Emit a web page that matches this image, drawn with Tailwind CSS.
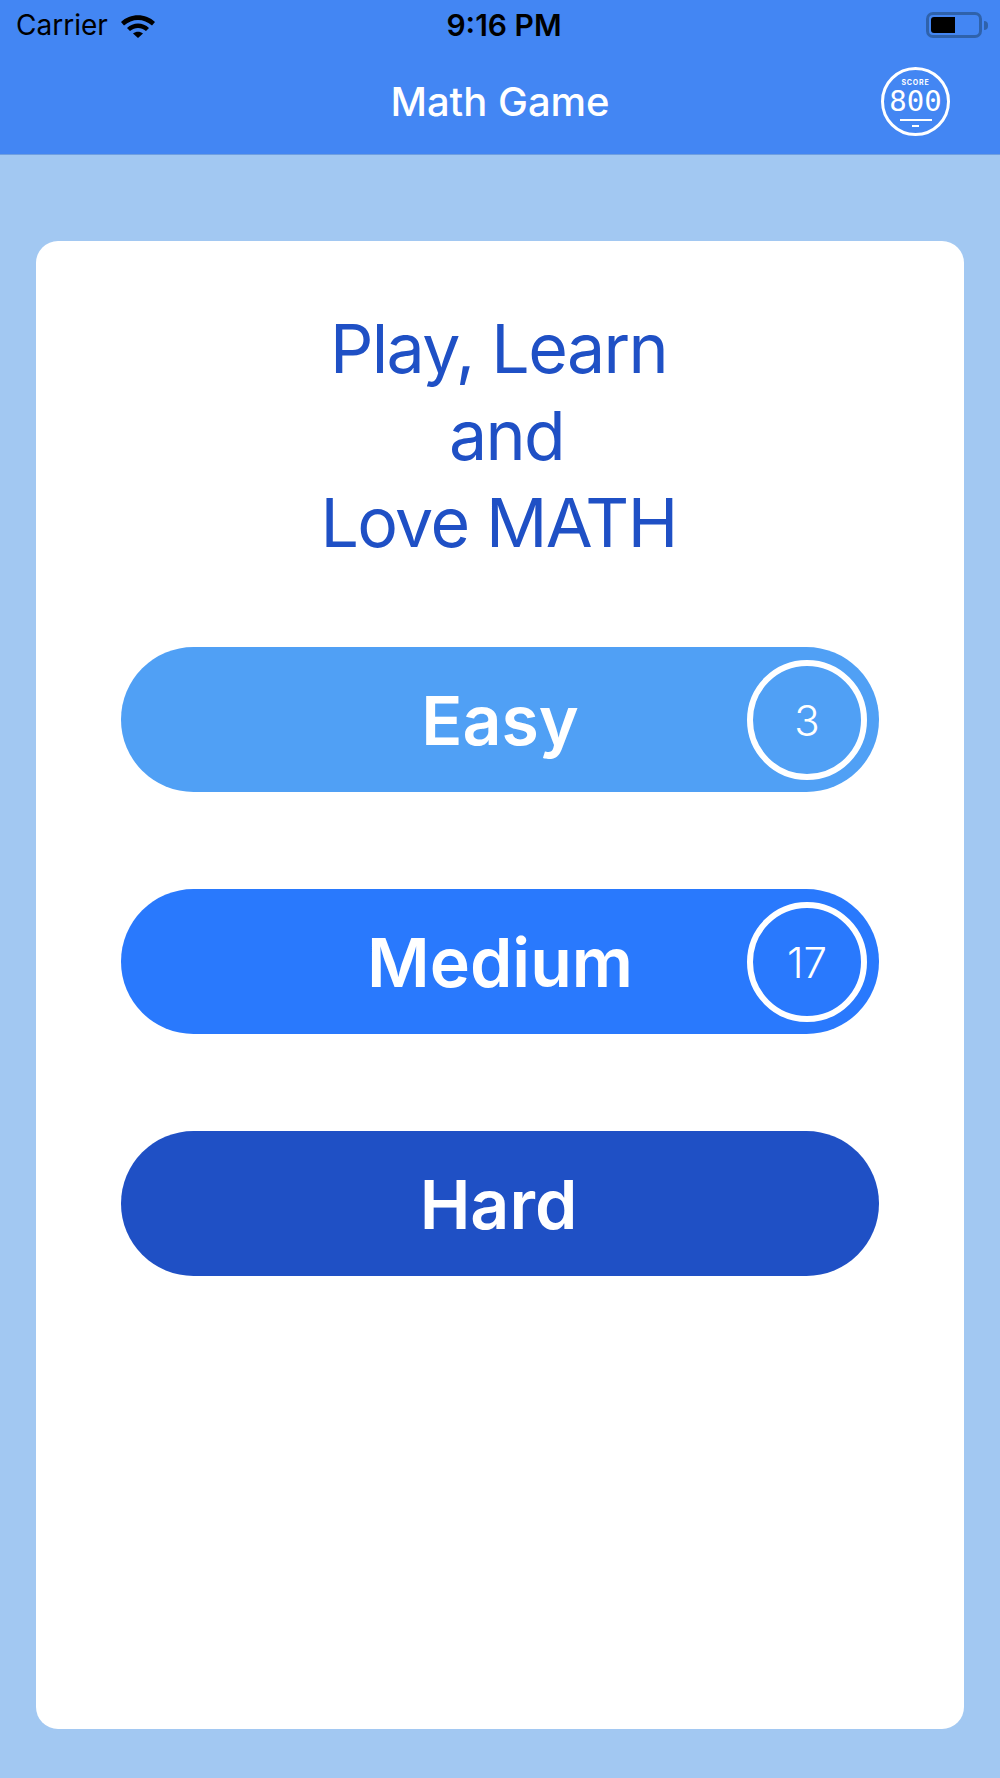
<!DOCTYPE html>
<html lang="en">
<head>
  <meta charset="UTF-8" />
  <title>Math Game</title>
  <script src="https://cdn.jsdelivr.net/npm/@tailwindcss/browser@4"></script>
</head>
<body class="bg-[#a2c8f2] font-['Inter',sans-serif] h-[1778px] w-[1000px] overflow-hidden flex flex-col">
  <header class="h-[155px] bg-[#4386f3] border-b border-[#6f9fe0] shrink-0 flex flex-col">
    <div class="h-[50px] pl-[16px] pr-[12px] grid grid-cols-3 items-center text-black text-[28px]">
      <div class="flex items-center gap-[13px]">
        <span>Carrier</span>
        <svg width="34" height="25" viewBox="0 0 34 25" fill="currentColor">
          <path d="M0 9 C9 0 25 0 34 9 L31 12.5 C23 5 11 5 3 12.5 Z" />
          <path d="M6 15 C12 9 22 9 28 15 L25 18 C20 14 14 14 9 18 Z" />
          <path d="M12 20.5 C15 18 19 18 22 20.5 L17 25 Z" />
        </svg>
      </div>
      <div class="text-center font-semibold text-[30px] pl-[4px] whitespace-nowrap">9:16 PM</div>
      <div class="flex justify-end items-center">
        <div class="w-[56px] h-[26px] rounded-[7px] border-[3px] border-[#2f62ab] p-[2px] flex">
          <div class="w-[24px] bg-black rounded-l-[3px]"></div>
        </div>
        <div class="w-[4px] h-[9px] ml-[2px] bg-[#2f62ab] rounded-r-full"></div>
      </div>
    </div>
    <div class="relative flex-1 flex items-center justify-center">
      <h1 class="text-white font-medium text-[40px]">Math Game</h1>
      <div class="absolute left-[881px] top-[17px] w-[69px] h-[69px] rounded-full border-[3px] border-white flex flex-col items-center text-white">
        <span class="text-[7px] font-bold leading-[8px] mt-[9px] tracking-[0.8px]">SCORE</span>
        <span class="font-['DejaVu_Sans_Mono',monospace] text-[29px] font-light leading-[29px]">800</span>
        <div class="w-[32px] h-[2px] bg-white mt-[3px]"></div>
        <div class="w-[7px] h-[2px] bg-white mt-[4px]"></div>
      </div>
    </div>
  </header>

  <main class="mt-[86px] mx-[36px] h-[1488px] bg-white rounded-[22px] px-[85px] flex flex-col">
    <h2 class="mt-[64px] pr-[3px] text-center text-[#1f50c5] text-[68px] leading-[87px] font-normal tracking-[-1.6px]">Play, Learn<br /><span class="inline-block pl-[16px]">and</span><br />Love MATH</h2>
    <div class="mt-[81px] flex flex-col gap-[97px]">
      <button class="relative h-[145px] rounded-full bg-[#50a0f5] text-white text-[68px] font-semibold text-center">
        Easy
        <span class="absolute right-[12px] top-[13px] w-[120px] h-[120px] rounded-full border-[6px] border-white flex items-center justify-center text-[42px] font-light">3</span>
      </button>
      <button class="relative h-[145px] rounded-full bg-[#2979fd] text-white text-[68px] font-semibold text-center">
        Medium
        <span class="absolute right-[12px] top-[13px] w-[120px] h-[120px] rounded-full border-[6px] border-white flex items-center justify-center text-[42px] font-light">17</span>
      </button>
      <button class="h-[145px] rounded-full bg-[#1f50c5] text-white text-[68px] font-semibold text-center pr-[3px]">Hard</button>
    </div>
  </main>
</body>
</html>
